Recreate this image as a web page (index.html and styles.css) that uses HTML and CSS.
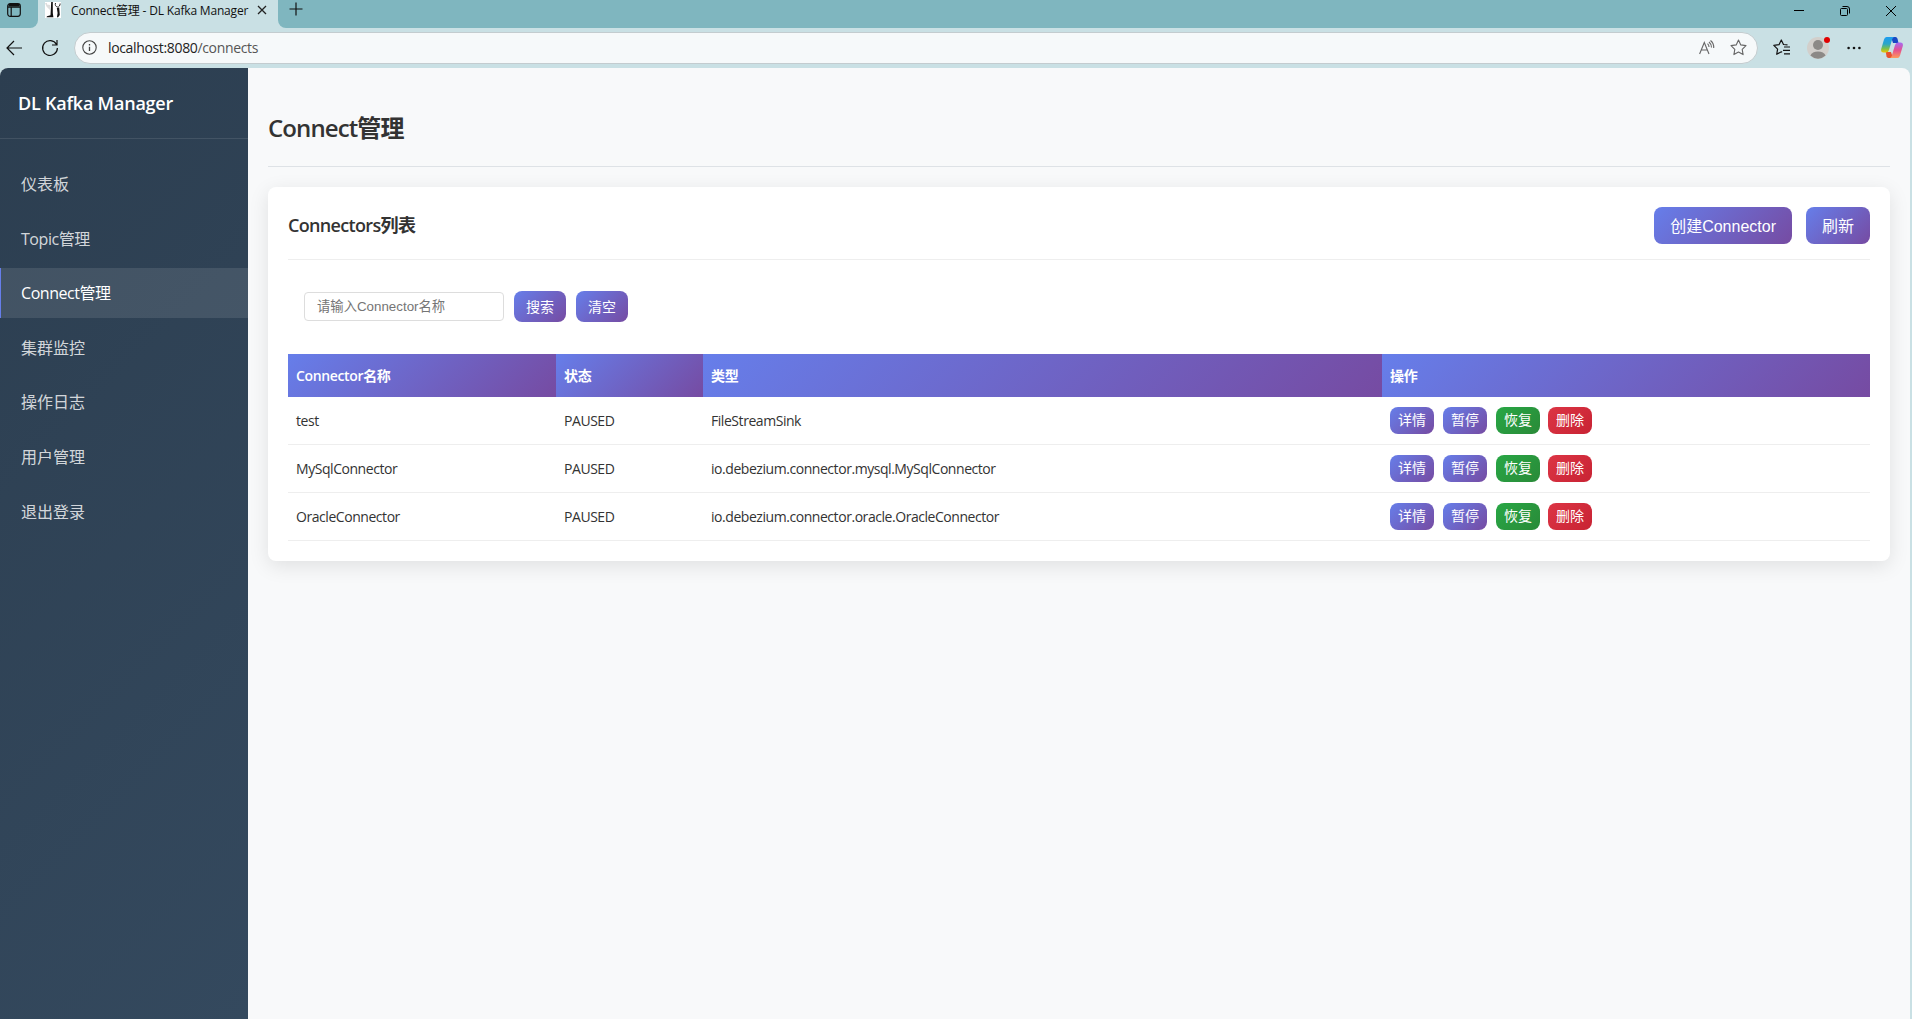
FILE: index.html
```html
<!DOCTYPE html>
<html lang="zh-CN">

<head>
    <meta charset="UTF-8">
    <meta name="viewport" content="width=device-width, initial-scale=1.0">
    <title>Connect管理 - DL Kafka Manager</title>
    <link rel="stylesheet" href="styles.css">
</head>

<body>
    <div class="browser">
        <div class="tab-bar">
            <div class="tab-menu">
                <svg width="14" height="14" viewBox="0 0 14 14" fill="none" stroke="#111" stroke-width="1.2"><rect x=".7" y=".7" width="12.6" height="12.6" rx="2.5"/><path d="M1 4.2h12M4.2 4v9" /><path d="M1.5 2.3h11" stroke-width="2.6"/></svg>
            </div>
            <div class="tab">
                <svg class="favicon" width="16" height="16" viewBox="0 0 16 16"><rect width="16" height="16" fill="#fff"/><path d="M6.200 0h1.600v11l.6 4.200H1.500l.5-1 3.500-.9z" fill="#111"/><path d="M0 1h2v1.500l3.200.5-.3 5-3.400-3.500z" fill="#ddd"/><path d="M11.800 6l2.400-.5.6 7.500-1.900 2.500-.9-.5.6-4z" fill="#111"/><path d="M10.500 1c-.7 2 .3 3.800 2 4 1.600.2 2.600-1.500 2.600-3.500" stroke="#222" fill="none"/></svg>
                <span class="tab-title">Connect管理 - DL Kafka Manager</span>
                <svg width="10" height="10" viewBox="0 0 10 10" fill="none" stroke="#222" stroke-width="1.3"><path d="M1 1l8 8M9 1l-8 8"/></svg>
            </div>
            <svg class="new-tab" width="14" height="14" viewBox="0 0 14 14" fill="none" stroke="#111" stroke-width="1.2"><path d="M7 .5v13M.5 7h13"/></svg>
            <div class="window-btns">
                <svg width="10" height="10" viewBox="0 0 10 10" stroke="#000"><path d="M0 4.500h10"/></svg>
                <svg width="10" height="10" viewBox="0 0 10 10" fill="none" stroke="#000"><rect x=".5" y="2.500" width="7" height="7" rx="1"/><path d="M2.500.5H7A2.500 2.500 0 0 1 9.500 3v4.500"/></svg>
                <svg width="10" height="10" viewBox="0 0 10 10" fill="none" stroke="#000"><path d="M0 0l10 10M10 0L0 10"/></svg>
            </div>
        </div>
        <div class="toolbar">
            <svg class="back" width="17" height="16" viewBox="0 0 17 16" fill="none" stroke="#111" stroke-width="1.2"><path d="M16 8H1M8 1L1 8l7 7"/></svg>
            <svg class="reload" width="18" height="18" viewBox="0 0 18 18" fill="none" stroke="#111" stroke-width="1.2"><path d="M15.500 5.500A7.400 7.400 0 1 0 16.400 9M16 1v5h-5"/></svg>
            <div class="address">
                <svg width="15" height="15" viewBox="0 0 15 15" fill="none" stroke="#444" stroke-width="1.1"><circle cx="7.500" cy="7.500" r="6.700"/><path d="M7.500 6.700v4.300M7.500 4v1.400" stroke-width="1.3"/></svg>
                <span class="url"><b>localhost:8080</b>/connects</span>
                <svg class="read" width="16" height="15" viewBox="0 0 16 15" fill="none" stroke="#666" stroke-width="1.1"><path d="M.6 14L5.300 2.500 10 14M2.200 10h6.200M8.500 3.700q1.500 1.300 1.500 3.300M10 2q2.500 2 2.500 5.500M11.500.5q3.500 2.800 3.200 7.500"/></svg>
                <svg width="17" height="17" viewBox="0 0 17 17" fill="none" stroke="#666" stroke-width="1.1"><path d="M8.500 1l2.300 4.900 5.200.7-3.800 3.700.9 5.300-4.600-2.500-4.600 2.500.9-5.300L1 6.600l5.200-.7z" stroke-linejoin="round"/></svg>
            </div>
            <svg class="fav" width="17" height="17" viewBox="0 0 17 17" fill="none" stroke="#111" stroke-width="1.2"><path d="M14.500 5.800L10.500 5.500 8.300 1 6 5.700l-5.200.7 3.800 3.700-.9 5.200 4.600-2.500.8.400M11 8h6M10 11.400h7M11 14.800h6" stroke-linejoin="round"/></svg>
            <div class="avatar">
                <svg width="22" height="22" viewBox="0 0 22 22"><circle cx="11" cy="11" r="11" fill="#d2cfcb"/><circle cx="11" cy="8" r="5" fill="#8c8986"/><path d="M3.400 18.600a8 6 0 0 1 15.200 0A11 11 0 0 1 3.400 18.600z" fill="#8c8986"/></svg>
                <i></i>
            </div>
            <svg class="more" width="14" height="4" viewBox="0 0 14 4" fill="#111"><circle cx="1.600" cy="2" r="1.300"/><circle cx="7" cy="2" r="1.300"/><circle cx="12.400" cy="2" r="1.300"/></svg>
            <svg width="22" height="21" viewBox="0 0 22 21">
                <defs>
                    <linearGradient id="cpA" x1="0" y1="0" x2="0" y2="1"><stop offset="0" stop-color="#1b9cf0"/><stop offset=".45" stop-color="#2aa6c8"/><stop offset=".75" stop-color="#7cc04a"/><stop offset="1" stop-color="#f2c500"/></linearGradient>
                    <linearGradient id="cpB" x1="0" y1="0" x2="0" y2="1"><stop offset="0" stop-color="#a56af5"/><stop offset=".5" stop-color="#e5508e"/><stop offset="1" stop-color="#ff9a5a"/></linearGradient>
                </defs>
                <path d="M10 0h4.500q1.500 0 2 1.800L17.500 6H12z" fill="#1848c4"/>
                <path d="M12 21H7.500Q6 21 5.500 19.200L4.800 15H10z" fill="#e8502c"/>
                <path d="M5.500 0H13q-1.300.5-1.900 2.500L8 13q-.7 2.500-3 2.500H2.500Q-.6 15.500.2 12L3 2.500Q3.600 0 5.500 0z" fill="url(#cpA)"/>
                <path d="M16.500 21H9q1.300-.5 1.900-2.500L14 8q.7-2.500 3-2.500h2.500q3.100 0 2.300 3.500L19 18.500Q18.400 21 16.500 21z" fill="url(#cpB)"/>
            </svg>
        </div>
    </div>
    <div id="app">
        <div class="sidebar">
            <div class="logo">DL Kafka Manager</div>
            <ul class="menu">
                <li><a href="#">仪表板</a></li>
                <li><a href="#" class="mixed">Topic管理</a></li>
                <li><a href="#" class="mixed active">Connect管理</a></li>
                <li><a href="#">集群监控</a></li>
                <li><a href="#">操作日志</a></li>
                <li><a href="#">用户管理</a></li>
                <li><a href="#">退出登录</a></li>
            </ul>
        </div>
        <div class="main">
            <h1>Connect管理</h1>
            <div class="card">
                <div class="card-header">
                    <h2>Connectors列表</h2>
                    <div class="card-btns">
                        <button class="btn">创建Connector</button>
                        <button class="btn">刷新</button>
                    </div>
                </div>
                <div class="search">
                    <input type="text" id="keyword" placeholder="请输入Connector名称" />
                    <button class="btn btn-md">搜索</button>
                    <button class="btn btn-md">清空</button>
                </div>
                <table>
                    <colgroup>
                        <col class="col-name"><col class="col-status"><col class="col-type"><col>
                    </colgroup>
                    <thead>
                        <tr><th>Connector名称</th><th>状态</th><th>类型</th><th>操作</th></tr>
                    </thead>
                    <tbody>
                        <tr>
                            <td>test</td><td>PAUSED</td><td>FileStreamSink</td>
                            <td>
                                <div class="actions">
                                    <button class="btn btn-sm">详情</button>
                                    <button class="btn btn-sm">暂停</button>
                                    <button class="btn btn-sm success">恢复</button>
                                    <button class="btn btn-sm danger">删除</button>
                                </div>
                            </td>
                        </tr>
                        <tr>
                            <td>MySqlConnector</td><td>PAUSED</td><td>io.debezium.connector.mysql.MySqlConnector</td>
                            <td>
                                <div class="actions">
                                    <button class="btn btn-sm">详情</button>
                                    <button class="btn btn-sm">暂停</button>
                                    <button class="btn btn-sm success">恢复</button>
                                    <button class="btn btn-sm danger">删除</button>
                                </div>
                            </td>
                        </tr>
                        <tr>
                            <td>OracleConnector</td><td>PAUSED</td><td>io.debezium.connector.oracle.OracleConnector</td>
                            <td>
                                <div class="actions">
                                    <button class="btn btn-sm">详情</button>
                                    <button class="btn btn-sm">暂停</button>
                                    <button class="btn btn-sm success">恢复</button>
                                    <button class="btn btn-sm danger">删除</button>
                                </div>
                            </td>
                        </tr>
                    </tbody>
                </table>
            </div>
        </div>
    </div>
</body>

</html>
```
FILE: styles.css
```css
* {
    margin: 0;
    padding: 0;
    box-sizing: border-box;
}

body {
    height: 100vh;
    display: flex;
    flex-direction: column;
    overflow: hidden;
    background: #c9e0e4;
    color: #333;
    font-family: "Open Sans", "Noto Sans CJK SC", sans-serif;
    font-size: 14px;
    letter-spacing: -.025em;
}

svg {
    display: block;
    flex: none;
}

/* browser */
.browser {
    flex: none;
    height: 68px;
}

.tab-bar {
    display: flex;
    height: 28px;
    background: #c9e0e4;
}

.tab-menu {
    width: 38px;
    padding: 3px 0 0 7px;
    background: #7fb6bf;
    border-bottom-right-radius: 8px;
}

.tab {
    display: flex;
    align-items: center;
    width: 240px;
    height: 19px;
    padding-left: 7px;
}

.tab-title {
    width: 177px;
    margin: 0 9px 0 10px;
    color: #111;
    font-size: 12px;
    letter-spacing: -.015em;
    white-space: nowrap;
}

.new-tab {
    box-sizing: content-box;
    padding: 2px 0 12px 11px;
    background: #7fb6bf;
    border-bottom-left-radius: 8px;
}

.window-btns {
    flex: 1;
    display: flex;
    justify-content: flex-end;
    gap: 36px;
    padding: 6px 16px 0 0;
    background: #7fb6bf;
}

.toolbar {
    display: flex;
    align-items: center;
    height: 39px;
    padding: 0 9px 0 6px;
}

.reload {
    margin-left: 18px;
}

.address {
    flex: 1;
    display: flex;
    align-items: center;
    height: 32px;
    margin: 0 15px 0 15px;
    padding: 0 10px 0 7px;
    background: #f6f9fa;
    border: 1px solid #c3cccf;
    border-radius: 16px;
}

.url {
    flex: 1;
    margin-left: 11px;
    color: #555;
    font-size: 14px;
}

.url b {
    color: #222;
    font-weight: normal;
}

.read {
    margin-right: 15px;
}

.avatar {
    position: relative;
    margin: 0 18px 0 17px;
}

.avatar i {
    position: absolute;
    top: 0;
    right: -1px;
    width: 6px;
    height: 6px;
    background: #e00000;
    border-radius: 50%;
}

.more {
    margin-right: 20px;
}

/* page */
#app {
    flex: 1;
    display: flex;
    margin-right: 2px;
    background: #f8f9fa;
    border-radius: 8px 8px 0 0;
    overflow: hidden;
}

.sidebar {
    flex: none;
    width: 248px;
    background: linear-gradient(135deg, #2c3e50, #34495e);
}

.logo {
    height: 71px;
    padding-left: 18px;
    color: #fff;
    font-size: 18px;
    font-weight: 600;
    letter-spacing: -.012em;
    line-height: 70px;
    border-bottom: 1px solid rgba(255, 255, 255, .1);
}

.menu {
    padding-top: 20px;
    list-style: none;
}

.menu li {
    margin-bottom: 4.6px;
}

.menu a {
    display: block;
    height: 50px;
    padding-left: 20px;
    color: rgba(255, 255, 255, .8);
    font-size: 16px;
    letter-spacing: 0;
    line-height: 50px;
    text-decoration: none;
    border-left: 1px solid transparent;
}

.menu .mixed {
    letter-spacing: -.028em;
}

.menu .active {
    color: #fff;
    background: rgba(255, 255, 255, .1);
    border-left-color: #667eea;
}

.main {
    flex: 1;
    padding: 20px;
}

h1 {
    height: 79px;
    margin-bottom: 20px;
    font-size: 24px;
    font-weight: 600;
    letter-spacing: -.037em;
    line-height: 80px;
    border-bottom: 1px solid #dee2e6;
}

.card {
    height: 374px;
    padding: 20px;
    background: #fff;
    border-radius: 8px;
    box-shadow: 0 5px 20px rgba(0, 0, 0, .1);
}

.card-header {
    display: flex;
    justify-content: space-between;
    height: 53px;
    border-bottom: 1px solid #eee;
}

h2 {
    font-size: 18px;
    font-weight: 600;
    letter-spacing: -.037em;
    line-height: 36px;
}

.card-btns {
    display: flex;
    gap: 14px;
}

.btn {
    height: 37px;
    padding: 0 16px 2px;
    color: #fff;
    font: 16px "Liberation Sans", "Noto Sans CJK SC", sans-serif;
    background: linear-gradient(135deg, #667eea, #764ba2);
    border: none;
    border-radius: 8px;
    cursor: pointer;
}

.btn-md {
    width: 52px;
    height: 31px;
    padding: 0 0 2px;
    font-size: 14px;
}

.btn-sm {
    width: 44px;
    height: 27px;
    padding: 0 0 2px;
    font-size: 14px;
}

.success {
    background: linear-gradient(135deg, #28a745, #2a8a38);
}

.danger {
    margin-left: -1px;
    background: linear-gradient(135deg, #dc3545, #c82333);
}

.search {
    display: flex;
    align-items: center;
    gap: 10px;
    padding: 31px 16px 32px;
}

.search input {
    width: 200px;
    height: 29px;
    padding: 0 12px;
    font: 13.333px "Liberation Sans", "Noto Sans CJK SC", sans-serif;
    border: 1px solid #ddd;
    border-radius: 4px;
}

table {
    width: 100%;
    table-layout: fixed;
    border-spacing: 0;
}

.col-name {
    width: 268px;
}

.col-status {
    width: 147px;
}

.col-type {
    width: 679px;
}

th {
    height: 43px;
    padding: 0 8px 2px;
    color: #fff;
    font-weight: 600;
    text-align: left;
    background: linear-gradient(135deg, #667eea, #764ba2);
}

td {
    height: 48px;
    padding: 0 8px 1px;
    letter-spacing: -.032em;
    border-bottom: 1px solid #eee;
}

.actions {
    display: flex;
    gap: 9px;
}
```
